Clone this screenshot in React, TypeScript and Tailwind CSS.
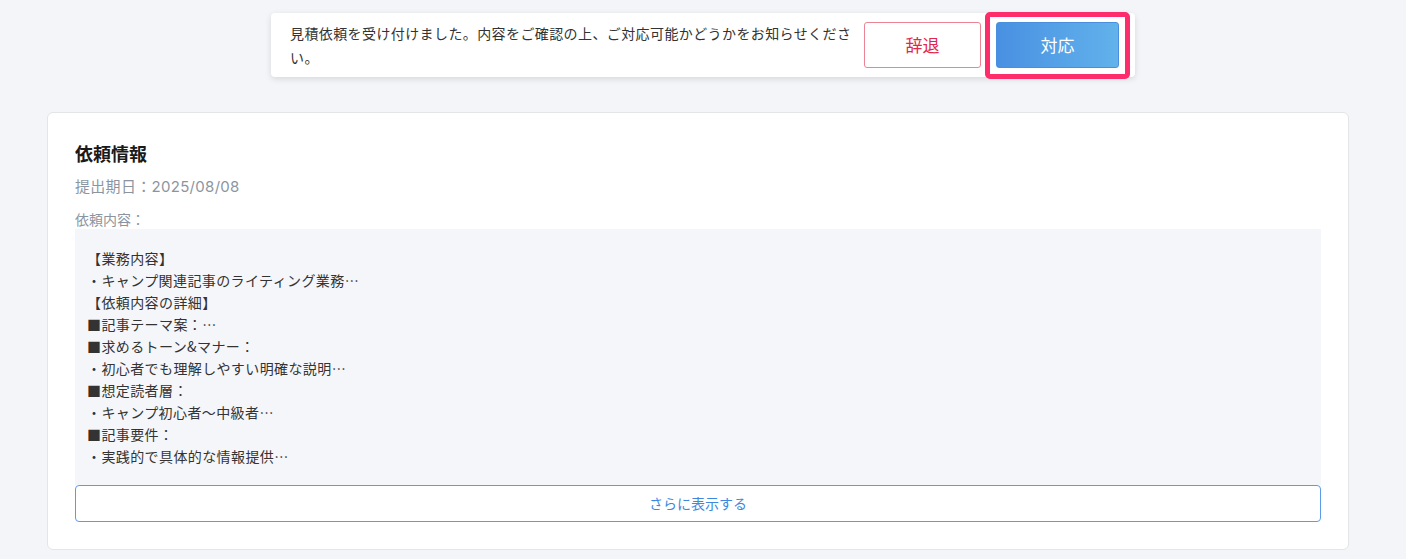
const requestLines = [
  '【業務内容】',
  '・キャンプ関連記事のライティング業務…',
  '【依頼内容の詳細】',
  '■記事テーマ案：…',
  '■求めるトーン&マナー：',
  '・初心者でも理解しやすい明確な説明…',
  '■想定読者層：',
  '・キャンプ初心者〜中級者…',
  '■記事要件：',
  '・実践的で具体的な情報提供…',
];

function RequestBanner() {
  return (
    <div className="mx-auto w-[864px] bg-white rounded-[4px] shadow-[0_2px_6px_rgba(0,0,0,0.12)] flex items-center pl-[19px] pr-4 py-2">
      <p className="w-[566px] text-[14px] leading-[24px] tracking-[0.4px] text-[#333]">
        見積依頼を受け付けました。内容をご確認の上、ご対応可能かどうかをお知らせください。
      </p>
      <button className="ml-2 w-[117px] h-[46px] rounded-[3px] border border-[#ec8593] bg-white text-[17px] text-[#e1274d]">
        辞退
      </button>
      {/* highlighted action */}
      <div className="relative ml-[15px]">
        <button className="w-[123px] h-[46px] rounded-[3px] border border-[#4a8fdd] bg-gradient-to-r from-[#4990e2] to-[#62b2eb] text-[17px] text-white">
          対応
        </button>
        <div className="absolute -left-[11px] -right-[11px] -top-[10px] -bottom-[11px] border-[5px] border-[#fd2d6c] rounded-[5px] pointer-events-none" />
      </div>
    </div>
  );
}

export default function App() {
  return (
    <div className="min-h-screen bg-[#f4f5f8] pt-[13px] font-['Noto_Sans_CJK_JP','Noto_Sans',sans-serif]">
      <RequestBanner />

      {/* Request info card */}
      <section className="ml-[47px] mt-[35px] w-[1302px] bg-white border border-[#e3e5e9] rounded-[6px] px-[27px] pt-[27px] pb-[27px]">
        <h2 className="text-[18px] leading-[26px] font-bold text-[#1a1a1a]">依頼情報</h2>
        <p className="mt-[10px] text-[15px] leading-[22px] tracking-[0.3px] text-[#8c959f] font-['Inter','Noto_Sans_CJK_JP',sans-serif]">
          提出期日：2025/08/08
        </p>
        <p className="mt-[11px] text-[14px] leading-[20px] text-[#8c959f]">依頼内容：</p>

        <div className="bg-[#f5f6fa] px-3 pt-[18px] pb-[18px] text-[14px] leading-[22px] tracking-[0.4px] text-[#333]">
          {requestLines.map((line, i) => (
            <div key={i}>{line}</div>
          ))}
        </div>

        <button className="w-full h-[37px] rounded-[4px] border border-[#5b9be8] bg-white text-[14px] text-[#3d89e0]">
          さらに表示する
        </button>
      </section>
    </div>
  );
}
